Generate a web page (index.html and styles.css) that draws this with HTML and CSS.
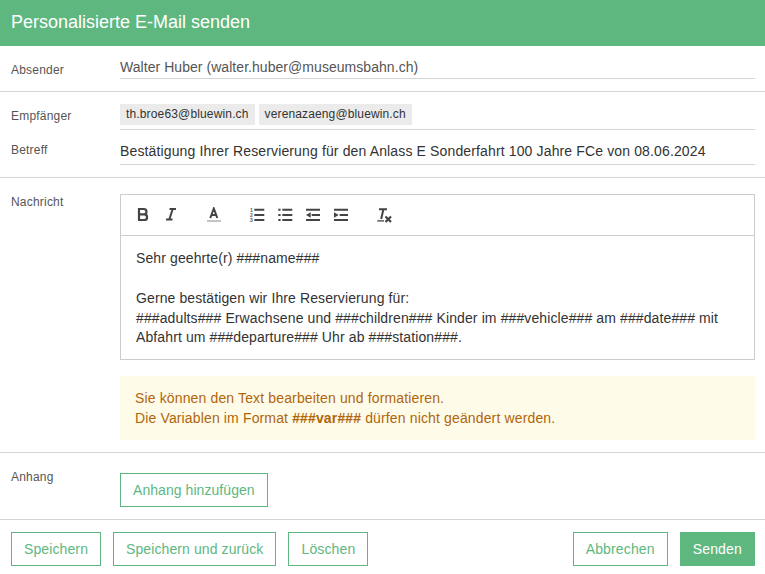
FILE: index.html
```html
<!DOCTYPE html>
<html lang="de">
<head>
<meta charset="utf-8">
<title>Personalisierte E-Mail senden</title>
<link rel="stylesheet" href="styles.css">
</head>
<body>
<div class="dialog">
  <header class="head">Personalisierte E-Mail senden</header>
  <section class="sec sec-from">
    <div class="row">
      <div class="lbl lbl-from">Absender</div>
      <div class="val val-from">Walter Huber (walter.huber@museumsbahn.ch)</div>
    </div>
  </section>
  <section class="sec sec-to">
    <div class="row">
      <div class="lbl lbl-to">Empfänger</div>
      <div class="val val-to"><span class="chip chip-a">th.broe63@bluewin.ch</span><span class="chip chip-b">verenazaeng@bluewin.ch</span></div>
    </div>
    <div class="row row-subj">
      <div class="lbl lbl-subj">Betreff</div>
      <div class="val val-subj">Bestätigung Ihrer Reservierung für den Anlass E Sonderfahrt 100 Jahre FCe von 08.06.2024</div>
    </div>
  </section>
  <section class="sec sec-msg">
    <div class="row">
      <div class="lbl lbl-msg">Nachricht</div>
      <div class="col">
        <div class="editor">
          <div class="toolbar">
            <svg class="ic" viewBox="0 0 16 16"><path d="M4 2h4.800a2.700 2.700 0 0 1 0 5.400H4zM4 7.400h5.300a2.800 2.800 0 0 1 0 5.600H4z" fill="none" stroke="#444" stroke-width="2.200"/></svg>
            <svg class="ic" viewBox="0 0 16 16"><path d="M6.500 2h6.500M3 12.500h6.500M9.700 2L6.300 12.500" fill="none" stroke="#444" stroke-width="2"/></svg>
            <svg class="ic ic-gap" viewBox="0 0 16 16"><path d="M4.300 11l3.500-9.500L11.300 11M5.500 8h4.600" fill="none" stroke="#444" stroke-width="2"/><rect x="1" y="13.200" width="14" height="1.700" fill="#bbb"/></svg>
            <svg class="ic ic-gap" viewBox="0 0 16 16"><path d="M5.300 2.800h10M5.300 8h10M5.300 13h10" stroke="#444" stroke-width="2"/><text class="num" x="1" y="4.500">1</text><text class="num" x="1" y="9.700">2</text><text class="num" x="1" y="14.800">3</text></svg>
            <svg class="ic" viewBox="0 0 16 16"><path d="M5.300 2.800h10M5.300 8h10M5.300 13h10M1.300 2.800h2.300M1.300 8h2.300M1.300 13h2.300" stroke="#444" stroke-width="2"/></svg>
            <svg class="ic" viewBox="0 0 16 16"><path d="M1 2.800h14M6.700 8h8.300M1 13h14" stroke="#444" stroke-width="2"/><path d="M5.700 5.200v5.600L1 8z" fill="#444"/></svg>
            <svg class="ic" viewBox="0 0 16 16"><path d="M1 2.800h14M6.700 8h8.300M1 13h14" stroke="#444" stroke-width="2"/><path d="M1 5.200v5.600L5.700 8z" fill="#444"/></svg>
            <svg class="ic ic-gap" viewBox="0 0 16 16"><path d="M3 2.300h8M7.400 2.300L5.200 12" fill="none" stroke="#444" stroke-width="2"/><path d="M1.300 13.900H8" stroke="#444" stroke-width="1.300"/><path d="M9.500 9.500l5.500 5.500M15 9.500L9.500 15" stroke="#444" stroke-width="2.200"/></svg>
          </div>
          <div class="body">
            <p>Sehr geehrte(r) ###name###</p>
            <p>Gerne bestätigen wir Ihre Reservierung für:<br>###adults### Erwachsene und ###children### Kinder im ###vehicle### am ###date### mit Abfahrt um ###departure### Uhr ab ###station###.</p>
          </div>
        </div>
        <div class="note">Sie können den Text bearbeiten und formatieren.<br>Die Variablen im Format <b>###var###</b> dürfen nicht geändert werden.</div>
      </div>
    </div>
  </section>
  <section class="sec sec-att">
    <div class="row">
      <div class="lbl">Anhang</div>
      <div class="col col-att"><button class="btn btn-att">Anhang hinzufügen</button></div>
    </div>
  </section>
  <footer class="foot">
    <button class="btn btn-save">Speichern</button>
    <button class="btn btn-back">Speichern und zurück</button>
    <button class="btn btn-del">Löschen</button>
    <span class="spacer"></span>
    <button class="btn btn-cancel">Abbrechen</button>
    <button class="btn btn-primary">Senden</button>
  </footer>
</div>
</body>
</html>
```
FILE: styles.css
```css
* { box-sizing: border-box; }
html, body { margin: 0; padding: 0; background: #fff; }
body { width: 765px; height: 574px; overflow: hidden; font-family: "Liberation Sans", Arial, sans-serif; color: #333; }
.head { height: 46px; background: #5eb77f; color: #fff; font-size: 18px; line-height: 45px; padding-left: 11px; }
.sec { border-bottom: 1px solid #d5d5d5; padding: 0 10px 0 11px; }
.sec-from { height: 46px; padding-top: 10px; }
.sec-to { height: 86px; padding-top: 12px; }
.sec-msg { height: 275px; padding-top: 16px; }
.sec-att { height: 67px; padding-top: 17px; }
.row { display: flex; }
.row-subj { margin-top: 8px; }
.lbl { width: 109px; flex: none; font-size: 12px; color: #555; line-height: 14px; letter-spacing: .2px; }
.lbl-from { padding-top: 7px; }
.lbl-to { padding-top: 5px; }
.lbl-subj { padding-top: 5px; }
.lbl-msg { padding-top: 1px; }
.val { flex: 1; border-bottom: 1px solid #d5d5d5; font-size: 14px; }
.val-from { height: 23px; line-height: 23px; color: #555; letter-spacing: .05px; }
.val-to { height: 26px; display: flex; gap: 4px; }
.chip { height: 21px; background: #ebebeb; padding: 0 6px; font-size: 12px; line-height: 21px; }
.chip-a { letter-spacing: .15px; }
.chip-b { letter-spacing: .13px; }
.val-subj { height: 27px; line-height: 26px; color: #333; letter-spacing: .137px; }
.col { flex: 1; }
.col-att { padding-top: 3px; }
.editor { border: 1px solid #ccc; }
.toolbar { height: 41px; border-bottom: 1px solid #ccc; display: flex; align-items: center; padding-left: 14px; }
.ic { width: 16px; height: 16px; margin-right: 12px; flex: none; }
.ic-gap { margin-left: 15px; }
.num { font: bold 5px "Liberation Sans", Arial, sans-serif; fill: #555; }
.body { height: 123px; padding: 13px 15px 0; font-size: 14px; line-height: 19.6px; color: #333; letter-spacing: .11px; }
.body p { margin: 0 0 20.4px; }
.note { margin-top: 16px; height: 64px; background: #fffbe9; color: #b0660a; font-size: 14px; line-height: 20px; padding: 12px 15px; letter-spacing: .14px; }
.btn { height: 34px; padding: 0 12px; border: 1px solid #5eb77f; background: #fff; color: #5eb77f; font: 14px "Liberation Sans", Arial, sans-serif; border-radius: 0; }
.btn-att { letter-spacing: .06px; }
.btn-save { letter-spacing: .11px; }
.btn-back { letter-spacing: .1px; }
.btn-del { letter-spacing: .14px; }
.btn-cancel { letter-spacing: .14px; }
.foot { display: flex; gap: 12px; padding: 12px 10px 0 11px; }
.spacer { flex: 1; }
.btn-primary { background: #5eb77f; color: #fff; letter-spacing: .17px; }
```
